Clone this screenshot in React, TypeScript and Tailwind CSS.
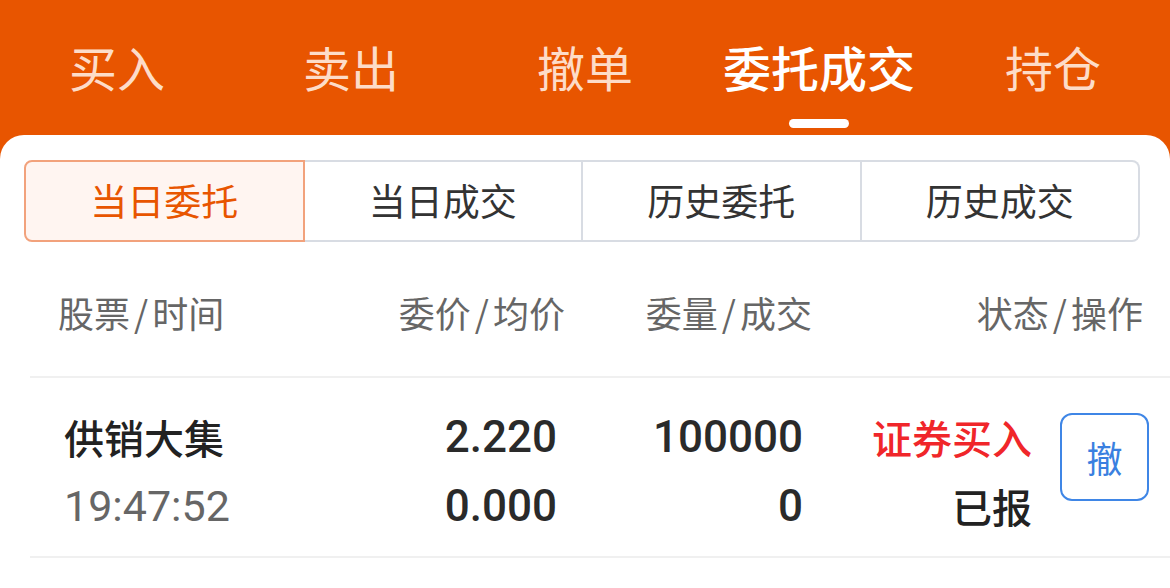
import { clsx } from 'clsx'

const TOP_TABS = ['买入', '卖出', '撤单', '委托成交', '持仓']
const SUB_TABS = ['当日委托', '当日成交', '历史委托', '历史成交']

const CJK = 'font-["Noto_Sans_CJK_SC",sans-serif]'
const NUM = 'font-["Roboto","Noto_Sans_CJK_SC",sans-serif]'

function Slashed({ a, b }: { a: string; b: string }) {
  return (
    <>
      {a}
      <span className="mx-[4px]">/</span>
      {b}
    </>
  )
}

export default function App() {
  const active = 3
  const activeSub = 0

  return (
    <div className={clsx('w-full h-[588px] bg-[#E85500] overflow-hidden flex flex-col', CJK)}>
      {/* top nav */}
      <div className="h-[135px] grid grid-cols-5 shrink-0">
        {TOP_TABS.map((t, i) => (
          <div key={t} className="flex flex-col items-center pt-[42px]">
            <span
              className={clsx(
                'text-[48px] leading-[48px]',
                i === active ? 'text-white font-medium' : 'text-[#FDDCC8]',
              )}
            >
              {t}
            </span>
            <span
              className={clsx(
                'mt-[29px] w-[60px] h-[9px] rounded-full',
                i === active ? 'bg-white' : 'bg-transparent',
              )}
            />
          </div>
        ))}
      </div>

      {/* card */}
      <div className="flex-1 bg-white rounded-t-[24px]">
        <div className="pt-[25px] pl-[24px] pr-[30px]">
          <div className="flex h-[82px]">
            {SUB_TABS.map((t, i) => (
              <div
                key={t}
                className={clsx(
                  'flex-1 flex items-center justify-center text-[37px] border-y-2 border-r-2',
                  i === 0 && 'border-l-2 rounded-l-[8px]',
                  i === SUB_TABS.length - 1 && 'rounded-r-[8px]',
                  i === activeSub
                    ? 'bg-[#FFF5F1] text-[#E85500] border-[#F2A27C]'
                    : 'text-[#333333] border-[#D8DCE3]',
                )}
              >
                {t}
              </div>
            ))}
          </div>
        </div>

        {/* header */}
        <div className="flex pl-[58px] pt-[52px] pb-[46px] text-[36px] leading-[36px] text-[#666666]">
          <div className="w-[307px]">
            <Slashed a="股票" b="时间" />
          </div>
          <div className="w-[200px] text-right">
            <Slashed a="委价" b="均价" />
          </div>
          <div className="w-[247px] text-right">
            <Slashed a="委量" b="成交" />
          </div>
          <div className="w-[331px] text-right">
            <Slashed a="状态" b="操作" />
          </div>
        </div>
        <div className="ml-[30px] h-[2px] bg-[#F0F0F0]" />

        {/* row */}
        <div className="flex pl-[64px] pt-[25px] pb-[15px] leading-[69px]">
          <div className="w-[293px] flex flex-col">
            <span className="text-[40px] font-medium text-[#222222]">供销大集</span>
            <span className={clsx('text-[43px] text-[#666666]', NUM)}>19:47:52</span>
          </div>
          <div className={clsx('w-[200px] flex flex-col items-end text-[44px] font-medium text-[#2A2A2A]', NUM)}>
            <span>2.220</span>
            <span>0.000</span>
          </div>
          <div className={clsx('w-[246px] flex flex-col items-end text-[44px] font-medium text-[#2A2A2A]', NUM)}>
            <span>100000</span>
            <span>0</span>
          </div>
          <div className="w-[229px] flex flex-col items-end text-[40px] font-medium">
            <span className="text-[#F0262A]">证券买入</span>
            <span className="text-[#222222]">已报</span>
          </div>
          <button className="ml-[28px] mt-[10px] self-start w-[89px] h-[88px] rounded-[12px] border-2 border-[#3F86E6] text-[#3A80E0] text-[36px] flex items-center justify-center">
            撤
          </button>
        </div>
        <div className="ml-[30px] h-[2px] bg-[#F0F0F0]" />
      </div>
    </div>
  )
}
